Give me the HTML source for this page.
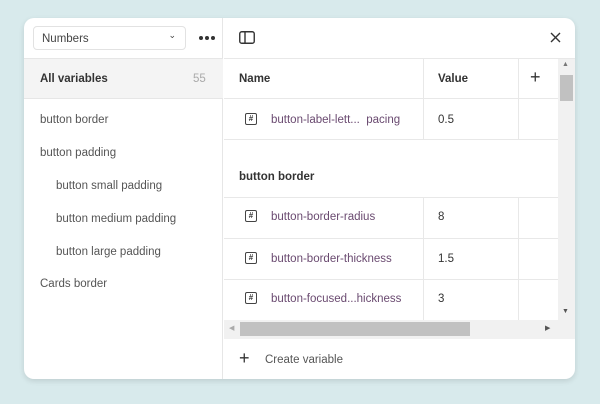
<!DOCTYPE html>
<html><head><style>
*{box-sizing:border-box;margin:0;padding:0}
body{width:600px;height:404px;background:#d8eaec;font-family:"Liberation Sans",sans-serif;font-size:11.5px;color:#333;position:relative;overflow:hidden}
.card{position:absolute;left:24px;top:18px;width:551px;height:361px;background:#fff;border-radius:10px;overflow:hidden;box-shadow:0 2px 6px rgba(0,0,0,.12)}
.side{position:absolute;left:0;top:0;width:199px;height:361px;border-right:1px solid #e6e6e6}
.sel{position:absolute;left:9px;top:8px;width:153px;height:24px;border:1px solid #e2e2e2;border-radius:4px;padding:6px 8px;color:#444}
.abs{position:absolute}
.t{position:absolute;white-space:nowrap}
.hl{position:absolute;background:#e8e8e8}
.name{color:#6a4a70}
.hash{position:absolute;width:12px;height:12px;border:1.3px solid #444;border-radius:2px;font-size:8px;line-height:9px;text-align:center;font-weight:bold;color:#333}
</style></head><body>
<div class="card">
<div class="side">
<div class="sel">Numbers<span style="position:absolute;right:9px;top:3px;font-size:9px">⌄</span></div>
<div class="abs" style="left:175px;top:18px;width:4px;height:4px;border-radius:2px;background:#333;box-shadow:6px 0 #333,12px 0 #333"></div>
<div class="abs" style="left:0;top:40px;width:199px;height:41px;background:#f4f4f4;border-top:1px solid #e6e6e6;border-bottom:1px solid #e6e6e6"></div>
<div class="t" style="left:16px;top:55px;font-weight:bold;color:#333">All variables</div>
<div class="t" style="left:169px;top:55px;color:#aaa">55</div>
<div class="t" style="left:16px;top:96px;color:#555">button border</div>
<div class="t" style="left:16px;top:129px;color:#555">button padding</div>
<div class="t" style="left:32px;top:162px;color:#555">button small padding</div>
<div class="t" style="left:32px;top:195px;color:#555">button medium padding</div>
<div class="t" style="left:32px;top:228px;color:#555">button large padding</div>
<div class="t" style="left:16px;top:260px;color:#555">Cards border</div>
</div>
<svg class="abs" style="left:215px;top:13px" width="16" height="13"><rect x="0.75" y="0.75" width="14.5" height="11.5" rx="2" fill="none" stroke="#333" stroke-width="1.4"/><line x1="6" y1="1" x2="6" y2="12" stroke="#333" stroke-width="1.4"/></svg>
<svg class="abs" style="left:526px;top:14px" width="11" height="11"><path d="M1 1L10 10M10 1L1 10" stroke="#333" stroke-width="1.4"/></svg>
<div class="hl" style="left:200px;top:40px;width:351px;height:1px"></div>
<div class="hl" style="left:200px;top:80px;width:334px;height:1px"></div>
<div class="hl" style="left:200px;top:121px;width:334px;height:1px"></div>
<div class="hl" style="left:200px;top:179px;width:334px;height:1px"></div>
<div class="hl" style="left:200px;top:220px;width:334px;height:1px"></div>
<div class="hl" style="left:200px;top:261px;width:334px;height:1px"></div>
<div class="hl" style="left:399px;top:41px;width:1px;height:80px"></div>
<div class="hl" style="left:494px;top:41px;width:1px;height:80px"></div>
<div class="hl" style="left:399px;top:180px;width:1px;height:122px"></div>
<div class="hl" style="left:494px;top:180px;width:1px;height:122px"></div>
<div class="t" style="left:215px;top:55px;font-weight:bold">Name</div>
<div class="t" style="left:414px;top:55px;font-weight:bold">Value</div>
<div class="t" style="left:506px;top:49px;font-size:18px;font-weight:300">+</div>
<div class="hash" style="left:221px;top:95px">#</div>
<div class="t name" style="left:247px;top:96px">button-label-lett...&nbsp; pacing</div>
<div class="t" style="left:414px;top:96px">0.5</div>
<div class="t" style="left:215px;top:153px;font-weight:bold">button border</div>
<div class="hash" style="left:221px;top:192px">#</div>
<div class="t name" style="left:247px;top:193px">button-border-radius</div>
<div class="t" style="left:414px;top:193px">8</div>
<div class="hash" style="left:221px;top:234px">#</div>
<div class="t name" style="left:247px;top:235px">button-border-thickness</div>
<div class="t" style="left:414px;top:235px">1.5</div>
<div class="hash" style="left:221px;top:274px">#</div>
<div class="t name" style="left:247px;top:275px">button-focused...hickness</div>
<div class="t" style="left:414px;top:275px">3</div>
<div class="abs" style="left:534px;top:41px;width:17px;height:261px;background:#f1f1f1"></div>
<div class="abs" style="left:536px;top:57px;width:13px;height:26px;background:#c1c1c1"></div>
<div class="t" style="left:538px;top:43px;font-size:7px;color:#777">▲</div>
<div class="t" style="left:538px;top:290px;font-size:7px;color:#555">▼</div>
<div class="abs" style="left:200px;top:302px;width:351px;height:19px;background:#f1f1f1"></div>
<div class="abs" style="left:216px;top:304px;width:230px;height:14px;background:#c1c1c1"></div>
<div class="t" style="left:205px;top:306px;font-size:7px;color:#aaa">◀</div>
<div class="t" style="left:521px;top:306px;font-size:7px;color:#555">▶</div>
<div class="t" style="left:215px;top:330px;font-size:18px;font-weight:300">+</div>
<div class="t" style="left:241px;top:336px;color:#555">Create variable</div>
</div>
</body></html>
